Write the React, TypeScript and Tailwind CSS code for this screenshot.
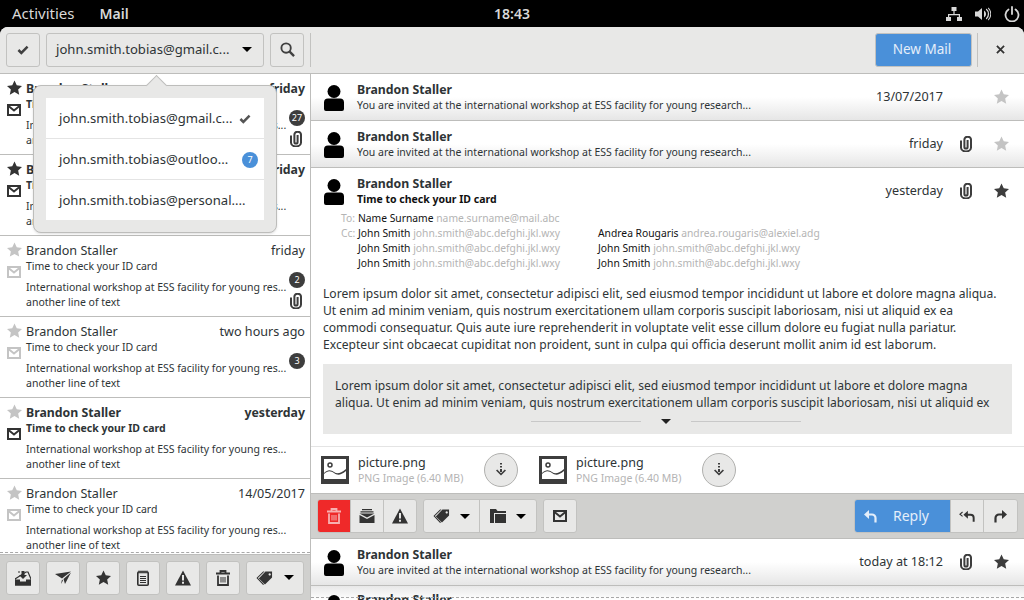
import React from "react";

const ui = { fontFamily: '"Noto Sans", "Open Sans", sans-serif' };

type IconProps = { className?: string };

const StarIcon = ({ className }: IconProps) => (
  <svg viewBox="0 0 16 16" className={className} fill="currentColor">
    <path d="M8 .5l2.4 5.100 5.600.7-4.100 3.800 1.100 5.500L8 12.900l-5 2.700 1.100-5.500L0 6.300l5.600-.7z" />
  </svg>
);

const MailIcon = ({ className }: IconProps) => (
  <svg viewBox="0 0 14 12" className={className} fill="none" stroke="currentColor">
    <rect x="1" y="1" width="12" height="10" strokeWidth="2" />
    <path d="M1.5 2L7 6.5 12.5 2" strokeWidth="2" />
  </svg>
);

const ClipIcon = ({ className }: IconProps) => (
  <svg viewBox="0 0 12 16" className={className} fill="none" stroke="currentColor" strokeWidth="2">
    <path d="M1 4.500v7a5 4 0 0 0 10 0v-8a3.300 2.800 0 0 0-6.600 0V11a1.600 1.600 0 0 0 3.200 0V4" />
  </svg>
);

const PersonIcon = ({ className }: IconProps) => (
  <svg viewBox="0 0 20 26" className={className} fill="currentColor">
    <circle cx="10" cy="6.5" r="6.5" />
    <path d="M4 13.500h12a4 4 0 0 1 4 4V24a2 2 0 0 1-2 2H2a2 2 0 0 1-2-2v-6.500a4 4 0 0 1 4-4z" />
  </svg>
);

const Caret = () => <span className="w-0 h-0 border-x-[5px] border-x-transparent border-t-[5px] border-t-black" />;

const Check = ({ className }: IconProps) => (
  <svg viewBox="0 0 14 12" className={className} fill="none" stroke="currentColor" strokeWidth="3">
    <path d="M1.5 6L5 9.500 12.500 2" />
  </svg>
);

const Search = () => (
  <svg viewBox="0 0 16 16" className="w-[15px] h-[15px] text-[#404040]" fill="none" stroke="currentColor" strokeWidth="2">
    <circle cx="6.5" cy="6.5" r="5" />
    <path d="M10 10l5 5" strokeWidth="2.5" />
  </svg>
);

const TrashIcon = ({ className }: IconProps) => (
  <svg viewBox="0 0 16 16" className={className} fill="none" stroke="currentColor" strokeWidth="1.8">
    <path d="M1 3.500h14M5.500 3V1h5v2" />
    <path d="M3 5.500V15h10V5.500" />
    <path d="M6 7v5.500M8 7v5.500M10 7v5.500" strokeWidth="1" />
  </svg>
);

const WarnIcon = ({ className }: IconProps) => (
  <svg viewBox="0 0 16 16" className={className}>
    <path d="M8 .5l8 15H0z" fill="currentColor" />
    <path d="M7 5h2v5.500H7zM7 11.800h2v2H7z" fill="#e8e8e7" />
  </svg>
);

const TagIcon = ({ className }: IconProps) => (
  <svg viewBox="0 0 18 16" className={className} fill="currentColor">
    <path fillRule="evenodd" d="M10 1h7v6.500L9.500 15 3 8.500zM14.500 3a1.200 1.200 0 1 0 .01 0z" />
    <path d="M.5 8l7-7H9L2 8l6.500 6.500-1 1z" />
  </svg>
);

const FolderIcon = ({ className }: IconProps) => (
  <svg viewBox="0 0 16 16" className={className} fill="currentColor">
    <path d="M0 1h6l1.500 2H16v2H4v10H0z" />
    <path d="M5 6h11v9H5z" />
  </svg>
);

const InboxIcon = ({ className }: IconProps) => (
  <svg viewBox="0 0 16 16" className={className}>
    <path d="M3 2h2M11 2h2l3 7v6H0V9z" fill="none" stroke="#303030" strokeWidth="1.2" />
    <path d="M0 9.500h5v2h6v-2h5v6H0z" fill="#303030" />
    <path d="M6.500 1h3v4H12L8 9 4 5h2.500z" fill="#303030" />
  </svg>
);

const SentIcon = ({ className }: IconProps) => (
  <svg viewBox="0 0 16 14" className={className} fill="currentColor">
    <path d="M0 3L16 .5 7 7.500zM16 1.500L8.500 8 10 13zM7 8.500l1 1-2 3.500z" />
  </svg>
);

const NoteIcon = ({ className }: IconProps) => (
  <svg viewBox="0 0 12 16" className={className} fill="none" stroke="#303030">
    <rect x=".8" y="2" width="10.4" height="13.2" rx="1" strokeWidth="1.6" />
    <path d="M2 .5v3M4 .5v3M6 .5v3M8 .5v3M10 .5v3M3 6.500h6M3 8.500h6M3 10.500h6M3 12.500h6" strokeWidth="1" />
  </svg>
);

const ArchiveMail = ({ className }: IconProps) => (
  <svg viewBox="0 0 16 16" className={className} fill="currentColor">
    <path d="M3 1h10v1.200H3zM1.500 3.200h13v1.200h-13z" />
    <path d="M.5 7L8 11l7.500-4v8H.5z" />
    <path d="M.5 5.400h15L8 9.500z" />
  </svg>
);

const ReplyArrow = ({ className }: IconProps) => (
  <svg viewBox="0 0 14 16" className={className} fill="none" stroke="currentColor" strokeWidth="2.2">
    <path d="M12.500 14.500V10A3.500 3.500 0 0 0 9 6.500H3" />
    <path d="M1 6.500L6 2v9z" fill="currentColor" stroke="none" />
  </svg>
);

const ReplyAllArrow = ({ className }: IconProps) => (
  <svg viewBox="0 0 18 16" className={className} fill="none" stroke="currentColor">
    <path d="M16.500 14.500V10A3.500 3.500 0 0 0 13 6.500H7" strokeWidth="2.2" />
    <path d="M5 6.500L10 2v9z" fill="currentColor" stroke="none" />
    <path d="M4 3.500L1 6l3 2.500" strokeWidth="1.2" />
  </svg>
);

const ForwardArrow = ({ className }: IconProps) => (
  <svg viewBox="0 0 14 16" className={className} fill="none" stroke="currentColor" strokeWidth="2.2">
    <path d="M1.500 14.500V10A3.500 3.500 0 0 1 5 6.500h6" />
    <path d="M13 6.500L8 2v9z" fill="currentColor" stroke="none" />
  </svg>
);

const PictureIcon = () => (
  <svg viewBox="0 0 28 28" className="w-7 h-7 shrink-0">
    <rect x="1.5" y="1.5" width="25" height="25" fill="#fff" stroke="#3d3d3d" strokeWidth="3" />
    <circle cx="9" cy="9" r="2" fill="none" stroke="#3d3d3d" strokeWidth="1.5" />
    <path d="M3 17c4-4 7-3 10-1s6 2 12-3v2c-6 5-9 4-12 2s-6-3-10 1z" fill="#3d3d3d" />
    <path d="M3 23h22v3H3z" fill="#3d3d3d" />
  </svg>
);

const DownloadCircle = () => (
  <span className="w-[34px] h-[34px] rounded-full border border-[#b0b0ae] bg-[#e8e8e7] flex items-center justify-center">
    <svg viewBox="0 0 12 14" className="w-3 h-3.5 text-[#3d3d3d]" fill="currentColor">
      <path d="M5 0h2v1.500H5zM5 3h2v1.500H5zM5 6h2v3H5z" />
      <path d="M1 7.500l5 5 5-5-1.200-1L6 10.200 2.200 6.500z" />
    </svg>
  </span>
);

const Btn = ({ children, className = "" }: { children: React.ReactNode; className?: string }) => (
  <div className={`h-[34px] rounded-[3px] border border-[#c2c2c0] bg-[#e8e8e7] flex items-center justify-center text-[#333] ${className}`}>
    {children}
  </div>
);

const Seg = ({ children, className = "" }: { children: React.ReactNode; className?: string }) => (
  <div className={`h-full flex items-center justify-center border-r border-[#c2c2c0] last:border-r-0 ${className}`}>
    {children}
  </div>
);

const mails = [
  { date: "friday", bold: true, starred: true, count: "27", clip: true },
  { date: "friday", bold: true, starred: true },
  { date: "friday", bold: false, starred: false, count: "2", clip: true },
  { date: "two hours ago", bold: false, starred: false, count: "3" },
  { date: "yesterday", bold: true, starred: false },
  { date: "14/05/2017", bold: false, starred: false },
];

const MailRow = ({ m }: { m: (typeof mails)[number] }) => (
  <div className="h-[81px] shrink-0 border-b border-[#bdbdbb] relative flex text-[#2e3436]">
    <div className="w-[26px] shrink-0 flex flex-col items-center pl-[2px] pt-[6px] gap-[9px]">
      <StarIcon className={`w-[15px] h-[15px] ${m.starred ? "text-[#333]" : "text-[#c4c4c4]"}`} />
      <MailIcon className={`w-[14px] h-[12px] ${m.bold ? "text-[#333]" : "text-[#c4c4c4]"}`} />
    </div>
    <div className="flex-1 min-w-0 pr-[5px] pt-[6px]">
      <div className={`flex justify-between leading-[18px] ${m.bold ? "font-bold text-[12.3px]" : "text-[12.6px]"}`}>
        <span>Brandon Staller</span>
        <span>{m.date}</span>
      </div>
      <div className={`text-[10.5px] leading-[15px] -mt-[1px] ${m.bold ? "font-bold" : ""}`}>Time to check your ID card</div>
      <div className="text-[10.5px] leading-[15px] mt-[6px]">International workshop at ESS facility for young res...</div>
      <div className="text-[10.5px] leading-[15px]">another line of text</div>
    </div>
    {m.count && (
      <span className="absolute right-[5px] top-[36px] w-4 h-4 rounded-full bg-[#3d3d3d] text-white text-[9px] flex items-center justify-center">
        {m.count}
      </span>
    )}
    {m.clip && <ClipIcon className="absolute right-[8px] top-[57px] w-3 h-4 text-[#3d3d3d]" />}
  </div>
);

const ThreadRow = ({ subject, date, clip, star }: { subject: string; date: string; clip?: boolean; star: boolean }) => (
  <div className="h-[47px] shrink-0 border-b border-[#bdbdbb] flex items-start pt-[7px] pl-[13px] pr-[15px] text-[#2e3436] bg-gradient-to-b from-white via-white to-[#e6e6e6]">
    <PersonIcon className="w-5 h-[26px] text-black mt-[4px] shrink-0" />
    <div className="ml-[13px] flex-1 min-w-0">
      <div className="text-[12.3px] leading-[18px] font-bold">Brandon Staller</div>
      <div className="text-[10.5px] leading-[15px] -mt-[1px]">{subject}</div>
    </div>
    <span className="text-[12.6px] mt-[7px] leading-[18px]">{date}</span>
    <span className="w-6 ml-[11px] mt-[8px] flex justify-center">{clip && <ClipIcon className="w-3 h-4 text-[#3d3d3d]" />}</span>
    <StarIcon className={`w-[15px] h-[15px] ml-[16px] mt-[8px] ${star ? "text-[#3d3d3d]" : "text-[#c4c4c4]"}`} />
  </div>
);

const invite = "You are invited at the international workshop at ESS facility for young research...";

const Addr = ({ name, mail }: { name: string; mail: string }) => (
  <div className="whitespace-nowrap">
    <span className="text-[#111]">{name}</span> <span className="text-[#b4b4b4]">{mail}</span>
  </div>
);

const js = { name: "John Smith", mail: "john.smith@abc.defghi.jkl.wxy" };

const Attachment = () => (
  <div className="flex items-center w-[218px]">
    <PictureIcon />
    <div className="ml-[9px] w-[126px]">
      <div className="text-[12.5px] leading-[16px] text-[#2e3436]">picture.png</div>
      <div className="text-[10.5px] leading-[15px] text-[#b4b4b4]">PNG Image (6.40 MB)</div>
    </div>
    <DownloadCircle />
  </div>
);

export default function App() {
  return (
    <div className="w-[1024px] h-[600px] bg-black overflow-hidden flex flex-col relative" style={ui}>
      {/* gnome top bar */}
      <div className="h-[27px] shrink-0 flex items-center text-[15px] text-[#d8d8d8] relative">
        <span className="ml-3">Activities</span>
        <span className="ml-[25px] font-semibold text-[14px]">Mail</span>
        <span className="absolute left-[494px] font-semibold text-[14px]">18:43</span>
        <div className="ml-auto flex items-center gap-[13px] pr-[4px] text-[#d8d8d8]">
          <svg viewBox="0 0 16 16" className="w-4 h-4" fill="currentColor">
            <path d="M5.500 1h5v4h-5zM0 11h5v4H0zM11 11h5v4h-5zM7.400 5h1.200v3H14v3h-1.200V9.200H3.200V11H2V8h5.400z" />
          </svg>
          <svg viewBox="0 0 16 16" className="w-4 h-4" fill="currentColor">
            <path d="M0 5.500h3L7 2v12l-4-3.500H0z" />
            <path d="M9 4.500a4 4 0 0 1 0 7zM11.500 2.500a7 7 0 0 1 0 11l-.7-1a6 6 0 0 0 0-9zM13.500 1.500a9 9 0 0 1 0 13l-.6-.8a8 8 0 0 0 0-11.400z" />
          </svg>
          <svg viewBox="0 0 16 16" className="w-4 h-4" fill="none" stroke="currentColor" strokeWidth="1.8" strokeLinecap="round">
            <path d="M8 1v7M4.500 3.500a6.500 6.500 0 1 0 7 0" />
          </svg>
        </div>
      </div>

      {/* window */}
      <div className="flex-1 min-h-0 rounded-t-[8px] overflow-hidden bg-white flex flex-col">
        <div className="h-[47px] shrink-0 bg-[#e8e8e7] border-b border-[#bdbdbb] flex items-center pl-[6px] pr-[8px] gap-[6px] pb-[1px]">
          <Btn className="w-[34px]"><Check className="w-3 h-2.5 text-[#404040]" /></Btn>
          <div className="w-[218px] h-[34px] rounded-[3px] border border-[#c2c2c0] bg-[#e8e8e7] flex items-center justify-between pl-[9px] pr-[11px]">
            <span className="text-[13.1px] text-[#2e3436]">john.smith.tobias@gmail.c...</span>
            <Caret />
          </div>
          <Btn className="w-[34px]"><Search /></Btn>
          <div className="w-px h-[34px] bg-[#c2c2c0]" />
          <div className="ml-auto h-[34px] w-[97px] rounded-[3px] border border-[#c2c2c0] bg-[#4a90d9] flex items-center justify-center text-[13.5px] text-[#e4eefa] pr-[3px]">New Mail</div>
          <div className="w-px h-[34px] bg-[#c2c2c0] -ml-[1px]" />
          <div className="w-[32px] flex justify-center text-[#333]">
            <svg viewBox="0 0 10 10" className="w-[9px] h-[9px]" fill="none" stroke="currentColor" strokeWidth="2"><path d="M1 1l8 8M9 1l-8 8" /></svg>
          </div>
        </div>

        <div className="flex-1 min-h-0 flex">
          {/* message list */}
          <div className="w-[311px] shrink-0 border-r border-[#bdbdbb] flex flex-col">
            <div className="flex-1 min-h-0 overflow-hidden relative">
              {mails.map((m, i) => <MailRow key={i} m={m} />)}
              <div className="absolute left-0 right-0 bottom-[1px] border-b border-dashed border-[#a8a8a8]" />
            </div>
            <div className="h-[46px] shrink-0 bg-[#d0d0ce] border-t border-[#bdbdbb] flex items-center pl-[6px] gap-[6px]">
              <Btn className="w-[34px]"><InboxIcon className="w-4 h-4" /></Btn>
              <Btn className="w-[34px]"><SentIcon className="w-4 h-3.5 text-[#333]" /></Btn>
              <Btn className="w-[34px]"><StarIcon className="w-[15px] h-[15px] text-[#333]" /></Btn>
              <Btn className="w-[34px]"><NoteIcon className="w-3 h-4" /></Btn>
              <Btn className="w-[34px]"><WarnIcon className="w-4 h-4 text-[#333]" /></Btn>
              <Btn className="w-[34px]"><TrashIcon className="w-4 h-4 text-[#333]" /></Btn>
              <Btn className="w-[58px] gap-[11px]"><TagIcon className="w-[17px] h-4 text-[#333]" /><Caret /></Btn>
            </div>
          </div>

          {/* conversation */}
          <div className="flex-1 min-w-0 flex flex-col overflow-hidden">
            <ThreadRow subject={invite} date="13/07/2017" star={false} />
            <ThreadRow subject={invite} date="friday" clip star={false} />

            <div className="h-[278px] shrink-0 flex flex-col text-[#2e3436]">
              <div className="flex items-start pt-[7px] pl-[13px] pr-[15px]">
                <PersonIcon className="w-5 h-[26px] text-black mt-[4px] shrink-0" />
                <div className="ml-[13px] flex-1 min-w-0">
                  <div className="text-[12.3px] leading-[18px] font-bold">Brandon Staller</div>
                  <div className="text-[10.5px] leading-[15px] -mt-[1px] font-bold text-[#111]">Time to check your ID card</div>
                </div>
                <span className="text-[12.6px] mt-[7px] leading-[18px]">yesterday</span>
                <span className="w-6 ml-[11px] mt-[8px] flex justify-center"><ClipIcon className="w-3 h-4 text-[#3d3d3d]" /></span>
                <StarIcon className="w-[15px] h-[15px] ml-[16px] mt-[8px] text-[#3d3d3d]" />
              </div>

              <div className="flex text-[10.3px] leading-[15px] pl-[30px] mt-[4px]">
                <div className="w-[17px] text-[#b4b4b4]">
                  <div>To:</div>
                  <div>Cc:</div>
                </div>
                <div className="w-[240px]">
                  <Addr name="Name Surname" mail="name.surname@mail.abc" />
                  <Addr {...js} />
                  <Addr {...js} />
                  <Addr {...js} />
                </div>
                <div className="pt-[15px]">
                  <Addr name="Andrea Rougaris" mail="andrea.rougaris@alexiel.adg" />
                  <Addr {...js} />
                  <Addr {...js} />
                </div>
              </div>

              <p className="text-[12.1px] leading-[17px] px-[12px] mt-[14px] text-[#2e3436] whitespace-nowrap">
                Lorem ipsum dolor sit amet, consectetur adipisci elit, sed eiusmod tempor incididunt ut labore et dolore magna aliqua.<br />
                Ut enim ad minim veniam, quis nostrum exercitationem ullam corporis suscipit laboriosam, nisi ut aliquid ex ea<br />
                commodi consequatur. Quis aute iure reprehenderit in voluptate velit esse cillum dolore eu fugiat nulla pariatur.<br />
                Excepteur sint obcaecat cupiditat non proident, sunt in culpa qui officia deserunt mollit anim id est laborum.
              </p>

              <div className="mx-[12px] mt-[11px] h-[70px] bg-[#e8e8e7] px-[12px] pt-[13px] text-[12.1px] leading-[17px] overflow-hidden relative whitespace-nowrap">
                <p>
                  Lorem ipsum dolor sit amet, consectetur adipisci elit, sed eiusmod tempor incididunt ut labore et dolore magna<br />
                  aliqua. Ut enim ad minim veniam, quis nostrum exercitationem ullam corporis suscipit laboriosam, nisi ut aliquid ex
                </p>
                <div className="absolute left-0 right-0 bottom-[10px] flex items-center justify-center gap-[20px] pr-[4px]">
                  <span className="w-[110px] h-px bg-[#c8c8c8]" />
                  <span className="w-0 h-0 border-x-[5px] border-x-transparent border-t-[5px] border-t-[#222]" />
                  <span className="w-[110px] h-px bg-[#c8c8c8]" />
                </div>
              </div>
            </div>

            <div className="h-[47px] shrink-0 border-t border-[#e4e4e4] flex items-center pl-[10px] bg-white">
              <Attachment />
              <Attachment />
            </div>

            <div className="h-[46px] shrink-0 bg-[#d0d0ce] border-y border-[#bdbdbb] flex items-center pl-[6px] pr-[6px] gap-[6px]">
              <div className="h-[34px] flex rounded-[3px] border border-[#c2c2c0] bg-[#e8e8e7] overflow-hidden text-[#333]">
                <Seg className="w-[33px] bg-[#ef2929]"><TrashIcon className="w-4 h-4 text-[#f7b0b0]" /></Seg>
                <Seg className="w-[33px]"><ArchiveMail className="w-4 h-4" /></Seg>
                <Seg className="w-[32px]"><WarnIcon className="w-4 h-4" /></Seg>
              </div>
              <div className="h-[34px] flex rounded-[3px] border border-[#c2c2c0] bg-[#e8e8e7] overflow-hidden text-[#333]">
                <Seg className="w-[56px] gap-[10px]"><TagIcon className="w-[17px] h-4" /><Caret /></Seg>
                <Seg className="w-[56px] gap-[10px]"><FolderIcon className="w-4 h-4" /><Caret /></Seg>
              </div>
              <Btn className="w-[34px]"><MailIcon className="w-[14px] h-[12px]" /></Btn>
              <div className="ml-auto h-[34px] flex rounded-[3px] border border-[#c2c2c0] bg-[#e8e8e7] overflow-hidden text-[#333]">
                <Seg className="w-[96px] bg-[#4a90d9] text-[#e4eefa] relative text-[14px]">
                  <ReplyArrow className="absolute left-[8px] w-3.5 h-4" />
                  <span className="ml-[17px] -mt-[2px]">Reply</span>
                </Seg>
                <Seg className="w-[33px]"><ReplyAllArrow className="w-4 h-4" /></Seg>
                <Seg className="w-[33px]"><ForwardArrow className="w-3.5 h-4" /></Seg>
              </div>
            </div>

            <ThreadRow subject={invite} date="today at 18:12" clip star />
            <div className="flex-1 bg-gradient-to-b from-[#e8e8e8] to-white relative overflow-hidden">
              <div className="border-t border-dashed border-[#a8a8a8] absolute top-[11px] left-0 right-0" />
              <div className="ml-[46px] mt-[5px] text-[12.3px] font-bold text-[#2e3436] leading-[18px]">Brandon Staller</div>
              <span className="absolute left-[17px] top-[9px] w-3 h-3 rounded-full bg-black" />
            </div>
          </div>
        </div>
      </div>

      {/* account popover */}
      <div className="absolute left-[33px] top-[85px] w-[244px] h-[148px] rounded-[8px] border border-[#bdbdbb] bg-[#e8e8e7] p-[12px] shadow-sm">
        <span className="absolute left-[115px] -top-[8px] w-[15px] h-[15px] rotate-45 bg-[#e8e8e7] border-l border-t border-[#bdbdbb]" />
        <div className="relative bg-white text-[13.1px] text-[#2e3436]">
          <div className="h-[41px] flex items-center justify-between pl-[13px] pr-[13px] pt-[2px] border-b border-[#e4e4e4]">
            <span>john.smith.tobias@gmail.c...</span>
            <Check className="w-3 h-2.5 text-[#555]" />
          </div>
          <div className="h-[41px] flex items-center justify-between pl-[13px] pr-[6px] pt-[2px] border-b border-[#e4e4e4]">
            <span>john.smith.tobias@outloo...</span>
            <span className="w-4 h-4 rounded-full bg-[#4a90d9] text-white text-[9px] flex items-center justify-center">7</span>
          </div>
          <div className="h-[40px] flex items-center pl-[13px] pt-[2px]">
            <span>john.smith.tobias@personal....</span>
          </div>
        </div>
      </div>
    </div>
  );
}
